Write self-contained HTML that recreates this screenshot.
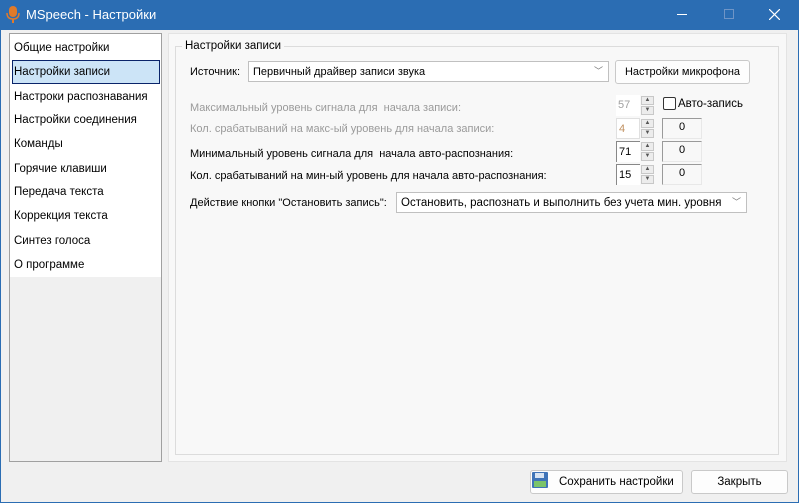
<!DOCTYPE html>
<html><head><meta charset="utf-8"><style>
*{margin:0;padding:0;box-sizing:border-box}
body{width:799px;height:503px;overflow:hidden;background:#f0f0f0;font-family:"Liberation Sans",sans-serif;font-size:11px;color:#000;position:relative}
.a{position:absolute;white-space:nowrap}
#tb{left:0;top:0;width:799px;height:30px;background:#2b6db3;color:#fff}
#frame{left:0;top:0;width:799px;height:503px;border:1px solid #2b6db3;pointer-events:none}
.list{left:9px;top:33px;width:153px;height:429px;border:1px solid #a0a0a0;background:#f0f0f0}
.wl{position:absolute;left:0;top:0;width:151px;height:243px;background:#fff}
.it{position:absolute;left:4px;font-size:11.5px}
.sel{position:absolute;left:2px;top:26px;width:148px;height:24px;background:#cce4f7;border:1px solid #0a246a}
.gray{color:#9a9a9a}
.box{background:#fff;border:1px solid #ababab}
.spin{position:absolute;width:13px;height:20px}
.spin div{height:9px;margin-bottom:1px;background:#ececec;border:1px solid #c8c8c8;font-size:6px;line-height:7px;text-align:center;color:#555}
.btn{background:#fdfdfd;border:1px solid #c9c9c9;border-radius:3px;text-align:center}
</style></head><body>
<div class="a" id="tb">
<svg class="a" style="left:6px;top:6px" width="14" height="18"><rect x="3" y="0" width="8" height="11" rx="4" fill="#e07a2a"/><path d="M1 7q0 6 6 6q6 0 6-6" stroke="#e07a2a" fill="none" stroke-width="1.5"/><rect x="6" y="13" width="2" height="4" fill="#e07a2a"/></svg>
<div class="a" style="left:26px;top:7px;font-size:13px">MSpeech - Настройки</div>
<div class="a" style="left:677px;top:14px;width:10px;height:1px;background:#fff"></div>
<div class="a" style="left:724px;top:9px;width:10px;height:10px;border:1px solid #6f95c6"></div>
<svg class="a" style="left:769px;top:9px" width="11" height="11"><path d="M0 0L11 11M11 0L0 11" stroke="#fff" stroke-width="1.2"/></svg>
</div>
<div class="a list"><div class="wl"></div>
<div class="sel"></div>
<div class="it" style="top:8px">Общие настройки</div>
<div class="it" style="top:32px">Настройки записи</div>
<div class="it" style="top:57px">Настроки распознавания</div>
<div class="it" style="top:80px">Настройки соединения</div>
<div class="it" style="top:104px">Команды</div>
<div class="it" style="top:129px">Горячие клавиши</div>
<div class="it" style="top:152px">Передача текста</div>
<div class="it" style="top:176px">Коррекция текста</div>
<div class="it" style="top:201px">Синтез голоса</div>
<div class="it" style="top:225px">О программе</div>
</div>
<div class="a" style="left:168px;top:33px;width:619px;height:429px;background:#f8f8f8;border:1px solid #e3e3e3"></div>
<div class="a" style="left:175px;top:46px;width:604px;height:409px;border:1px solid #dcdcdc"></div>
<div class="a" style="left:182px;top:40px;background:#f8f8f8;padding:0 3px;font-size:11.5px">Настройки записи</div>
<div class="a" style="left:190px;top:66px">Источник:</div>
<div class="a box" style="left:248px;top:61px;width:361px;height:21px;border-color:#c0c0c0"><span class="a" style="left:4px;top:4px">Первичный драйвер записи звука</span><span class="a" style="right:5px;top:2px;color:#777;font-size:9px">﹀</span></div>
<div class="a btn" style="left:615px;top:60px;width:135px;height:24px;line-height:22px">Настройки микрофона</div>
<div class="a gray" style="left:190px;top:102px">Максимальный уровень сигнала для &nbsp;начала записи:</div>
<div class="a gray" style="left:190px;top:123px">Кол. срабатываний на макс-ый уровень для начала записи:</div>
<div class="a" style="left:190px;top:148px">Минимальный уровень сигнала для &nbsp;начала авто-распознания:</div>
<div class="a" style="left:190px;top:170px">Кол. срабатываний на мин-ый уровень для начала авто-распознания:</div>
<div class="a" style="left:616px;top:95px;width:24px;height:21px;background:#fff;color:#a0a0a0;padding:4px 2px">57</div>
<div class="a" style="left:616px;top:118px;width:24px;height:21px;background:#fff;color:#c09060;padding:4px 2px;border:1px solid #e0e0e0">4</div>
<div class="a" style="left:616px;top:141px;width:24px;height:21px;background:#fff;padding:4px 2px;border-left:1px solid #888;border-top:1px solid #888">71</div>
<div class="a" style="left:616px;top:164px;width:24px;height:21px;background:#fff;padding:4px 2px;border-left:1px solid #888;border-top:1px solid #888">15</div>
<div class="spin a" style="left:641px;top:96px"><div>▲</div><div>▼</div></div>
<div class="spin a" style="left:641px;top:119px"><div>▲</div><div>▼</div></div>
<div class="spin a" style="left:641px;top:142px"><div>▲</div><div>▼</div></div>
<div class="spin a" style="left:641px;top:165px"><div>▲</div><div>▼</div></div>
<div class="a" style="left:663px;top:97px;width:13px;height:13px;border:1px solid #333;border-radius:2px;background:#fff"></div>
<div class="a" style="left:678px;top:98px;font-size:11.5px">Авто-запись</div>
<div class="a" style="left:662px;top:118px;width:40px;height:21px;border:1px solid #9a9a9a;border-right-color:#e8e8e8;border-bottom-color:#e8e8e8;text-align:center;padding-top:2px">0</div>
<div class="a" style="left:662px;top:141px;width:40px;height:21px;border:1px solid #9a9a9a;border-right-color:#e8e8e8;border-bottom-color:#e8e8e8;text-align:center;padding-top:2px">0</div>
<div class="a" style="left:662px;top:164px;width:40px;height:21px;border:1px solid #9a9a9a;border-right-color:#e8e8e8;border-bottom-color:#e8e8e8;text-align:center;padding-top:2px">0</div>
<div class="a" style="left:190px;top:197px">Действие кнопки "Остановить запись":</div>
<div class="a box" style="left:396px;top:192px;width:351px;height:21px;border-color:#c0c0c0"><span class="a" style="left:4px;top:4px;font-size:11.5px">Остановить, распознать и выполнить без учета мин. уровня</span><span class="a" style="right:5px;top:2px;color:#777;font-size:9px">﹀</span></div>
<div class="a btn" style="left:530px;top:470px;width:153px;height:24px"></div>
<svg class="a" style="left:532px;top:472px" width="16" height="16"><rect x="0" y="0" width="16" height="16" rx="1" fill="#3f74b8"/><rect x="3" y="1" width="9" height="5" fill="#d8e4f2"/><rect x="2" y="9" width="12" height="6" fill="#7bc46a"/></svg>
<div class="a" style="left:559px;top:476px;font-size:11.5px">Сохранить настройки</div>
<div class="a btn" style="left:691px;top:470px;width:97px;height:24px;line-height:22px;font-size:11.5px">Закрыть</div>
<div class="a" id="frame"></div>
</body></html>
